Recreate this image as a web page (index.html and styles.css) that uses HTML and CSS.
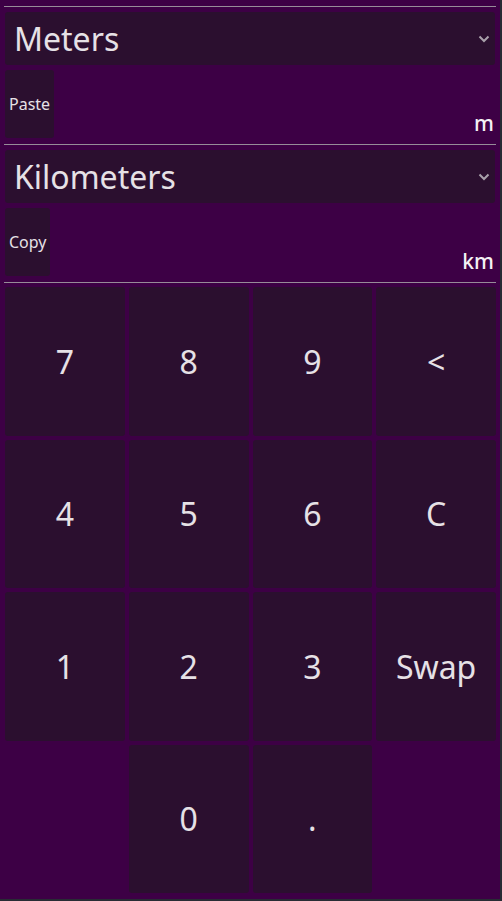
FILE: index.html
```html
<!DOCTYPE html>
<html>
<head>
<meta charset="utf-8">
<link rel="stylesheet" href="styles.css">
</head>
<body>
<div class="app">
  <section class="unit">
    <div class="sep"></div>
    <div class="select">
      <span class="select-label">Meters</span>
      <svg class="chev" width="12" height="8" viewBox="0 0 12 8"><path d="M1.5 1.5 L6 6 L10.5 1.5" fill="none" stroke="#a9a1ab" stroke-width="2"/></svg>
    </div>
    <div class="value-row">
      <button class="small-btn">Paste</button>
      <span class="suffix">m</span>
    </div>
  </section>
  <section class="unit">
    <div class="sep"></div>
    <div class="select">
      <span class="select-label">Kilometers</span>
      <svg class="chev" width="12" height="8" viewBox="0 0 12 8"><path d="M1.5 1.5 L6 6 L10.5 1.5" fill="none" stroke="#a9a1ab" stroke-width="2"/></svg>
    </div>
    <div class="value-row">
      <button class="small-btn">Copy</button>
      <span class="suffix">km</span>
    </div>
  </section>
  <div class="sep"></div>
  <div class="keypad">
    <button class="key">7</button>
    <button class="key">8</button>
    <button class="key">9</button>
    <button class="key">&lt;</button>
    <button class="key">4</button>
    <button class="key">5</button>
    <button class="key">6</button>
    <button class="key">C</button>
    <button class="key">1</button>
    <button class="key">2</button>
    <button class="key">3</button>
    <button class="key">Swap</button>
    <span class="blank"></span>
    <button class="key">0</button>
    <button class="key">.</button>
    <span class="blank"></span>
  </div>
</div>
</body>
</html>
```

FILE: styles.css
```css
html, body {
  margin: 0;
  padding: 0;
  background: #282c34;
}
body {
  width: 502px;
  height: 901px;
  overflow: hidden;
}
.app {
  width: 500px;
  height: 899px;
  background: #3d0045;
  box-sizing: border-box;
  padding: 6px 4px 0 4px;
  display: flex;
  flex-direction: column;
  font-family: "Noto Sans", "Open Sans", sans-serif;
  color: #e6e1e6;
}
.unit {
  display: flex;
  flex-direction: column;
}
.sep {
  height: 1px;
  background: #968c98;
  flex: none;
}
.select {
  margin: 5px 1px 0 1px;
  height: 53px;
  background: #2b0f2f;
  border-radius: 3px;
  display: flex;
  align-items: center;
  justify-content: space-between;
  padding: 0 5px 0 9px;
}
.select-label {
  font-size: 32px;
  line-height: 1;
  margin-top: 1px;
}
.chev {
  display: block;
}
.value-row {
  margin: 5px 0 6px 1px;
  height: 68px;
  display: flex;
  align-items: stretch;
  justify-content: space-between;
}
.small-btn {
  background: #2b0f2f;
  border: none;
  border-radius: 3px;
  color: #e6e1e6;
  font-family: "Noto Sans", "Open Sans", sans-serif;
  font-size: 16px;
  padding: 0 4px 0 4px;
  margin: 0;
}
.suffix {
  align-self: flex-end;
  font-size: 21px;
  font-weight: 500;
  color: #f4f1f4;
  line-height: 1;
  margin-bottom: 4px;
  margin-right: 2px;
}
.keypad {
  margin: 4px 0 0 1px;
  width: 491px;
  height: 606px;
  display: grid;
  grid-template-columns: repeat(4, 1fr);
  grid-template-rows: repeat(4, 1fr);
  gap: 4px;
}
.key {
  background: #2b0f2f;
  border: none;
  border-radius: 3px;
  color: #e6e1e6;
  font-family: "Noto Sans", "Open Sans", sans-serif;
  font-size: 32px;
  margin: 0;
  padding: 0;
}
```
